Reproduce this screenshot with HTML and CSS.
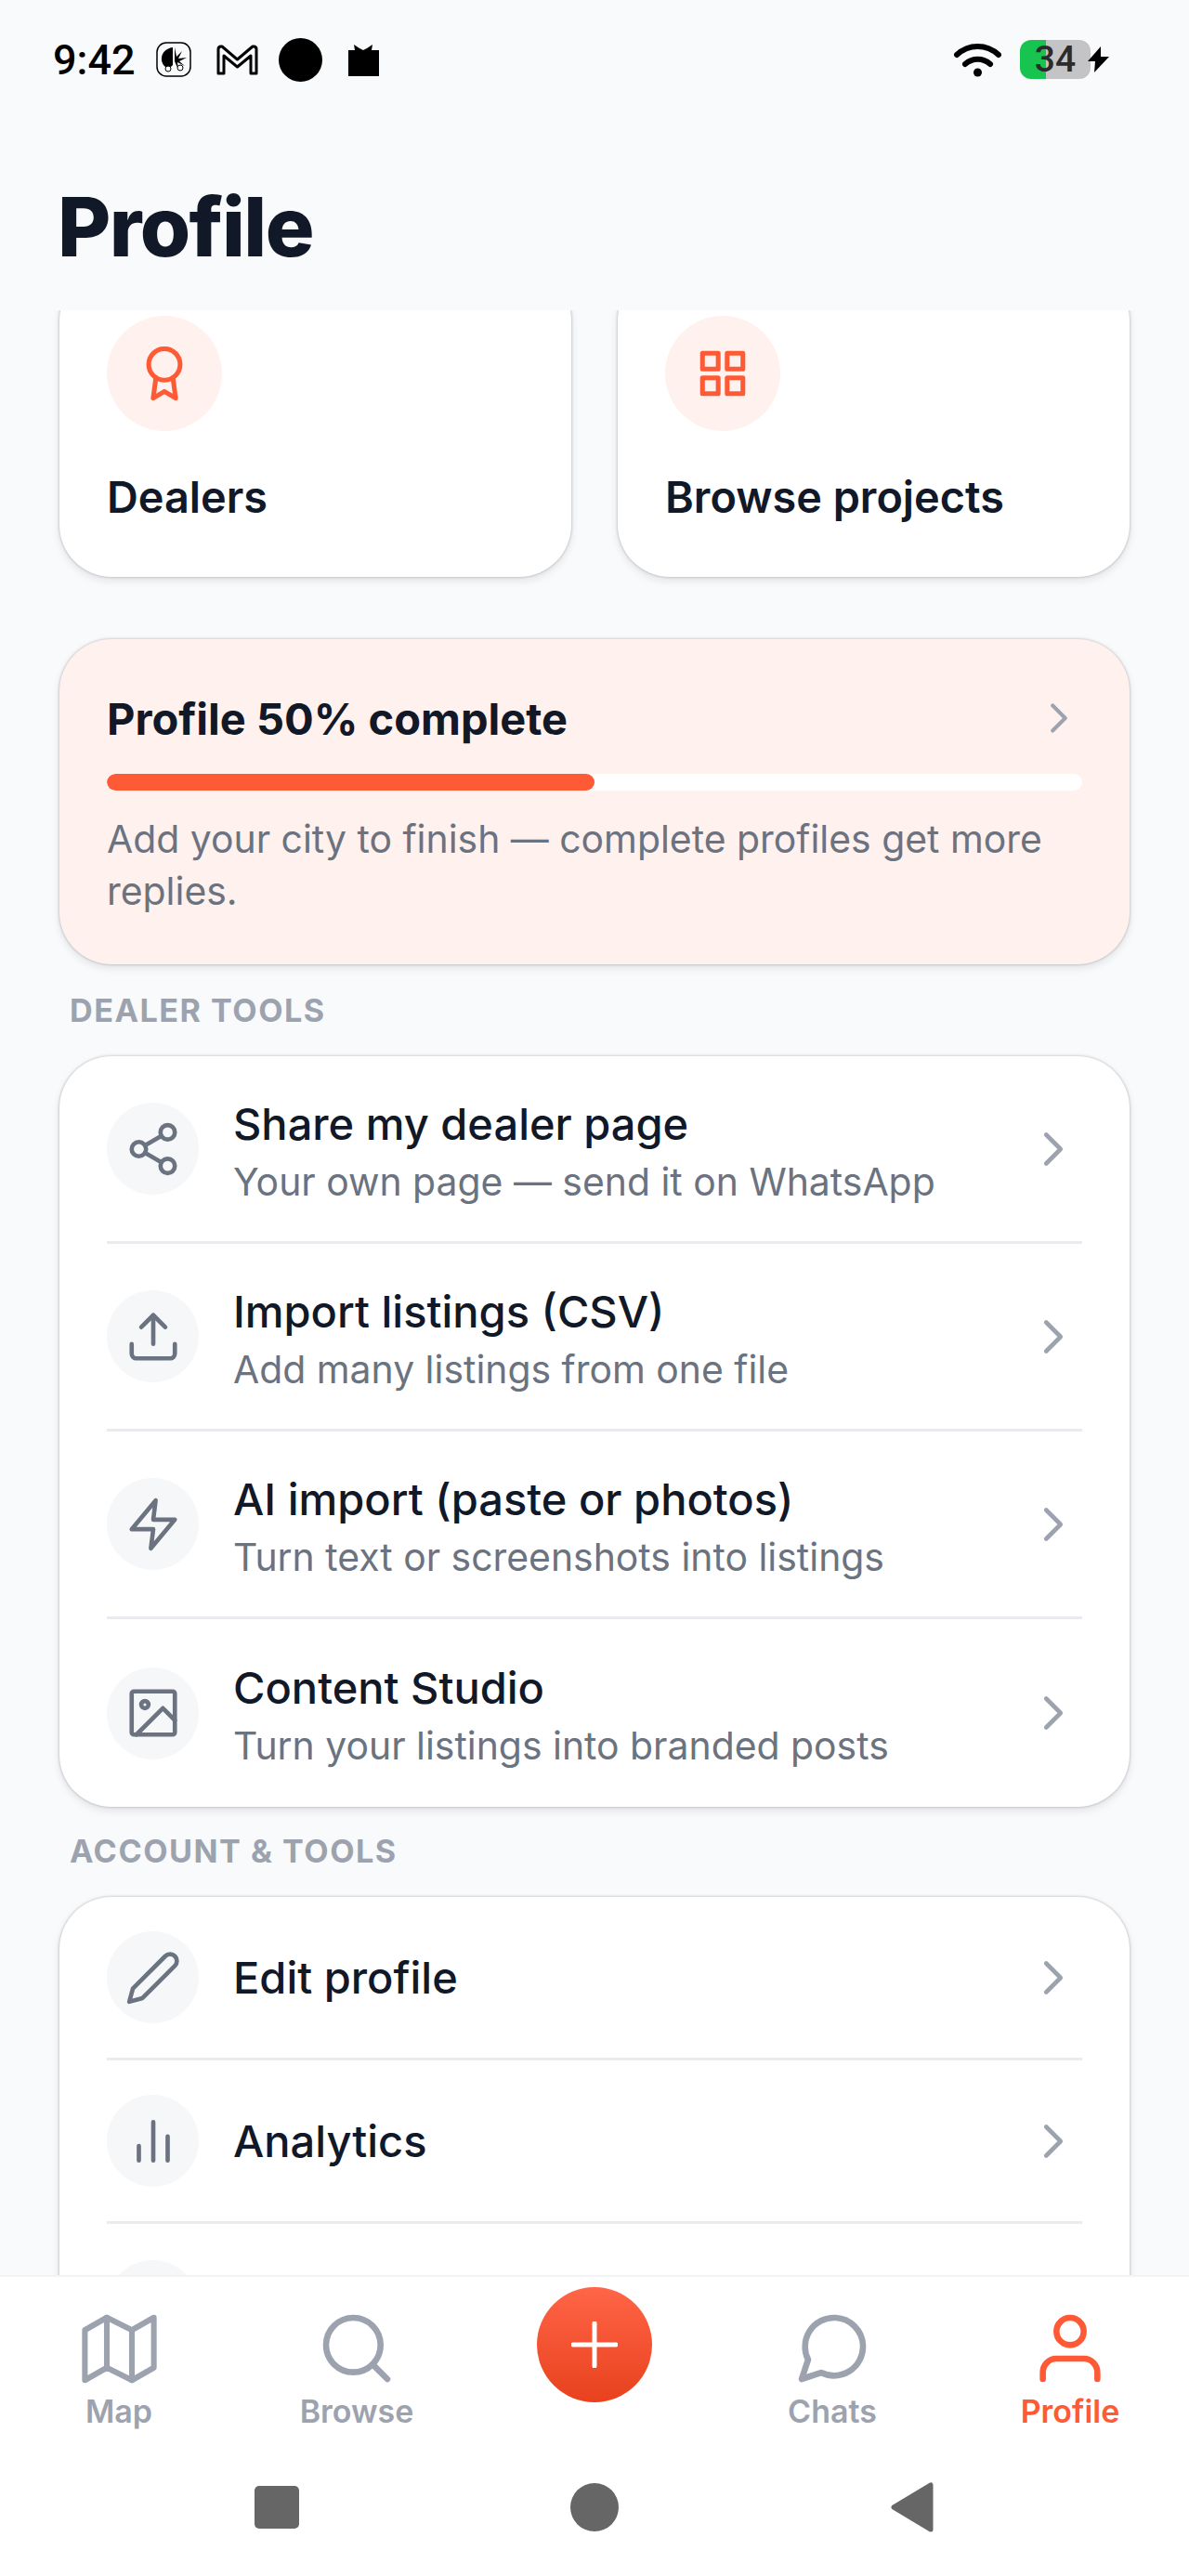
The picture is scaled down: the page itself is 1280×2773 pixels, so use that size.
FILE: index.html
```html
<!DOCTYPE html>
<html>
<head>
    <title>Profile</title>
    <link rel="stylesheet" href="styles.css">
</head>
<body>
    <div class="app">
        <div class="statusbar">
            <span class="clock">9:42</span>
            <svg class="st-app" viewBox="0 0 38 38"><rect x="1" y="1" width="36" height="36" rx="10" fill="none" stroke="#000" stroke-width="1.5"/><path d="M18 6C10 7 5 13 6 20c1 5 4 8 8 9l4-4z" fill="#000"/><path d="M20 6l2 10 6-6-4 8 9-1-8 4 6 5-8-4 1 8-4-9z" fill="#000"/><circle cx="26" cy="28" r="3" fill="#fff" stroke="#000"/><circle cx="13" cy="29" r="3" fill="#fff" stroke="#000"/></svg>
            <svg class="st-mail" viewBox="0 0 45 33"><path d="M2 31V5q0-3 3-3h1l16.500 14L39 2h1q3 0 3 3v26h-6V12L22.500 24 8 12v19z" fill="none" stroke="#000" stroke-width="3" stroke-linejoin="round"/></svg>
            <span class="st-dot"></span>
            <svg class="st-gift" viewBox="0 0 35 35"><path d="M1 7h7l-1-6 6 4 4 2 4-2 6-4-1 6h8v28H1z" fill="#000"/></svg>
            <span class="status-spacer"></span>
            <svg class="st-wifi" viewBox="0 0 51 37"><path d="M3 13C16 1 35 1 48 13M12 23c8-7 19-7 27 0" fill="none" stroke="#000" stroke-width="6" stroke-linecap="round"/><circle cx="25.500" cy="32" r="4.500" fill="#000"/></svg>
            <span class="battery">34</span>
            <svg class="st-bolt" viewBox="0 0 25 28"><path d="M15 0L1 16h8L8 28l16-17h-9z" fill="#000"/></svg>
        </div>

        <div class="pagehead">
            <h1 class="pagetitle">Profile</h1>
        </div>

        <div class="scroller">
            <div class="scroller-inner">
                <div class="quick-grid">
                    <div class="quick-card">
                        <span class="quick-icon">
                            <svg class="icon award" viewBox="0 0 24 24"><circle cx="12" cy="8" r="7"/><path d="M8.210 13.890L7 23l5-3 5 3-1.210-9.120"/></svg>
                        </span>
                        <div class="quick-label">Dealers</div>
                    </div>
                    <div class="quick-card">
                        <span class="quick-icon">
                            <svg class="icon" viewBox="0 0 24 24"><rect x="3" y="3" width="7" height="7"/><rect x="14" y="3" width="7" height="7"/><rect x="14" y="14" width="7" height="7"/><rect x="3" y="14" width="7" height="7"/></svg>
                        </span>
                        <div class="quick-label">Browse projects</div>
                    </div>
                </div>

                <div class="progress-card">
                    <div class="progress-head">
                        <span class="progress-title">Profile 50% complete</span>
                        <svg class="icon chevron-small" viewBox="0 0 24 24"><path d="M9 18l6-6-6-6"/></svg>
                    </div>
                    <div class="progress-track"><div class="progress-fill" style="width: 50%"></div></div>
                    <p class="progress-text">Add your city to finish — complete profiles get more replies.</p>
                </div>

                <div class="section-label">DEALER TOOLS</div>
                <div class="list-card">
                    <div class="row">
                        <span class="row-icon"><svg class="icon" viewBox="0 0 24 24"><circle cx="18" cy="5" r="3"/><circle cx="6" cy="12" r="3"/><circle cx="18" cy="19" r="3"/><path d="M8.590 13.510l6.830 3.980M15.410 6.510l-6.820 3.980"/></svg></span>
                        <div class="row-text">
                            <div class="row-title">Share my dealer page</div>
                            <div class="row-sub">Your own page — send it on WhatsApp</div>
                        </div>
                        <svg class="icon chevron" viewBox="0 0 24 24"><path d="M9 18l6-6-6-6"/></svg>
                    </div>
                    <div class="row">
                        <span class="row-icon"><svg class="icon" viewBox="0 0 24 24"><path d="M21 15v4a2 2 0 0 1-2 2H5a2 2 0 0 1-2-2v-4"/><path d="M17 8l-5-5-5 5"/><path d="M12 3v12"/></svg></span>
                        <div class="row-text">
                            <div class="row-title">Import listings (CSV)</div>
                            <div class="row-sub">Add many listings from one file</div>
                        </div>
                        <svg class="icon chevron" viewBox="0 0 24 24"><path d="M9 18l6-6-6-6"/></svg>
                    </div>
                    <div class="row">
                        <span class="row-icon"><svg class="icon" viewBox="0 0 24 24"><path d="M13 2L3 14h9l-1 8 10-12h-9z"/></svg></span>
                        <div class="row-text">
                            <div class="row-title">AI import (paste or photos)</div>
                            <div class="row-sub">Turn text or screenshots into listings</div>
                        </div>
                        <svg class="icon chevron" viewBox="0 0 24 24"><path d="M9 18l6-6-6-6"/></svg>
                    </div>
                    <div class="row">
                        <span class="row-icon"><svg class="icon" viewBox="0 0 24 24"><rect x="3" y="3" width="18" height="18" rx="1"/><circle cx="8.500" cy="8.500" r="1.500"/><path d="M21 15l-5-5L5 21"/></svg></span>
                        <div class="row-text">
                            <div class="row-title">Content Studio</div>
                            <div class="row-sub">Turn your listings into branded posts</div>
                        </div>
                        <svg class="icon chevron" viewBox="0 0 24 24"><path d="M9 18l6-6-6-6"/></svg>
                    </div>
                </div>

                <div class="section-label">ACCOUNT &amp; TOOLS</div>
                <div class="list-card">
                    <div class="row row-plain">
                        <span class="row-icon"><svg class="icon" viewBox="0 0 24 24"><path d="M17 3a2.828 2.828 0 1 1 4 4L7.500 20.500 2 22l1.500-5.500z"/></svg></span>
                        <div class="row-text">
                            <div class="row-title">Edit profile</div>
                        </div>
                        <svg class="icon chevron" viewBox="0 0 24 24"><path d="M9 18l6-6-6-6"/></svg>
                    </div>
                    <div class="row row-plain">
                        <span class="row-icon"><svg class="icon" viewBox="0 0 24 24"><path d="M18 20V10M12 20V4M6 20v-6"/></svg></span>
                        <div class="row-text">
                            <div class="row-title">Analytics</div>
                        </div>
                        <svg class="icon chevron" viewBox="0 0 24 24"><path d="M9 18l6-6-6-6"/></svg>
                    </div>
                    <div class="row row-plain">
                        <span class="row-icon"></span>
                    </div>
                </div>
            </div>
        </div>

        <div class="bottombar">
            <div class="tabs">
                <div class="tab">
                    <span class="tab-slot"><svg class="icon tab-map" viewBox="0 0 24 24"><path d="M1 6v16l7-4 8 4 7-4V2l-7 4-8-4z"/><path d="M8 2v16M16 6v16"/></svg></span>
                    <span class="tab-label">Map</span>
                </div>
                <div class="tab">
                    <span class="tab-slot"><svg class="icon tab-icon" viewBox="0 0 24 24"><circle cx="11" cy="11" r="8"/><path d="M21 21l-4.350-4.350"/></svg></span>
                    <span class="tab-label">Browse</span>
                </div>
                <div class="tab">
                    <span class="fab"><svg class="fab-plus" viewBox="0 0 50 50"><path d="M25 2v46M2 25h46"/></svg></span>
                </div>
                <div class="tab">
                    <span class="tab-slot"><svg class="icon tab-icon" viewBox="0 0 24 24"><path d="M21 11.500a8.380 8.380 0 0 1-.9 3.800 8.500 8.500 0 0 1-7.600 4.700 8.380 8.380 0 0 1-3.800-.9L3 21l1.900-5.700a8.380 8.380 0 0 1-.9-3.800 8.500 8.500 0 0 1 4.700-7.600 8.380 8.380 0 0 1 3.800-.9h.5a8.480 8.480 0 0 1 8 8z"/></svg></span>
                    <span class="tab-label">Chats</span>
                </div>
                <div class="tab tab-active">
                    <span class="tab-slot"><svg class="icon tab-icon" viewBox="0 0 24 24"><path d="M20 21v-2a4 4 0 0 0-4-4H8a4 4 0 0 0-4 4v2"/><circle cx="12" cy="7" r="4"/></svg></span>
                    <span class="tab-label">Profile</span>
                </div>
            </div>
            <div class="sysnav">
                <span class="sys-square"></span>
                <span class="sys-circle"></span>
                <svg class="sys-back" viewBox="0 0 48 54"><path d="M4 27L44 3v48z" fill="#666" stroke="#666" stroke-width="5" stroke-linejoin="round"/></svg>
            </div>
        </div>
    </div>
</body>
</html>
```

FILE: styles.css
```css
body {
    margin: 0;
    padding: 0;
    background-color: #f9fafb;
    font-family: Inter, "Noto Sans", sans-serif;
    color: #111827;
}

.app {
    width: 1280px;
    height: 2773px;
    display: flex;
    flex-direction: column;
    overflow: hidden;
}

.icon {
    fill: none;
    stroke: currentColor;
    stroke-width: 1.8;
    stroke-linecap: round;
    stroke-linejoin: round;
}

/* status bar */
.statusbar {
    height: 128px;
    flex: none;
    display: flex;
    align-items: center;
    padding: 0 85px 0 57px;
    color: #000;
}

.clock {
    font-family: Roboto, sans-serif;
    font-weight: 500;
    font-size: 45px;
    width: 111px;
}

.st-app {
    width: 38px;
    height: 38px;
}

.st-mail {
    width: 45px;
    height: 33px;
    margin-left: 27px;
}

.st-dot {
    width: 47px;
    height: 47px;
    border-radius: 50%;
    background-color: #000;
    margin-left: 22px;
}

.st-gift {
    width: 35px;
    height: 35px;
    margin-left: 27px;
}

.status-spacer {
    flex: 1;
}

.st-wifi {
    width: 51px;
    height: 37px;
}

.battery {
    width: 76px;
    height: 42px;
    margin-left: 20px;
    border-radius: 12px;
    background: linear-gradient(to right, #16c44f 37%, #c4c4c6 37%);
    font-family: Roboto, sans-serif;
    font-weight: 500;
    font-size: 39px;
    line-height: 42px;
    text-align: center;
    color: #2b2b2d;
}

.st-bolt {
    width: 25px;
    height: 28px;
    margin-left: -4px;
}

/* title */
.pagehead {
    height: 206px;
    flex: none;
    box-sizing: border-box;
    padding: 64px 62px 0;
}

.pagetitle {
    margin: 0;
    font-size: 88px;
    line-height: 104px;
    font-weight: 800;
    letter-spacing: -1.6px;
}

/* scrolling part */
.scroller {
    flex: 1;
    min-height: 0;
    overflow: hidden;
    padding: 0 64px;
}

.scroller-inner {
    margin-top: -45px;
}

.quick-grid {
    display: grid;
    grid-template-columns: 1fr 1fr;
    gap: 50px;
}

.quick-card,
.progress-card,
.list-card {
    border-radius: 56px;
    box-shadow: 0 0 3px rgba(17, 24, 39, 0.3), 0 4px 10px rgba(17, 24, 39, 0.1);
}

.quick-card {
    height: 332px;
    box-sizing: border-box;
    padding: 51px;
    background-color: #fff;
}

.quick-icon {
    width: 124px;
    height: 124px;
    border-radius: 50%;
    background-color: #fff1ed;
    color: #ff5a36;
    display: flex;
    align-items: center;
    justify-content: center;
}

.quick-icon .icon {
    width: 58px;
    height: 58px;
    stroke-width: 2.1;
}

.quick-label {
    margin-top: 40px;
    font-size: 46.8px;
    line-height: 62px;
    font-weight: 600;
}

.progress-card {
    margin: 67px 0 27px;
    height: 350px;
    box-sizing: border-box;
    padding: 54px 51px 0;
    background-color: #fff1ed;
}

.progress-head {
    display: flex;
    align-items: center;
    justify-content: space-between;
    height: 62px;
}

.progress-title {
    font-size: 47px;
    font-weight: 700;
}

.chevron-small {
    width: 54px;
    height: 54px;
    margin-right: -2px;
    color: #9ca3af;
}

.progress-track {
    margin-top: 29px;
    height: 18px;
    border-radius: 9px;
    background-color: #fff;
    overflow: hidden;
}

.progress-fill {
    height: 100%;
    border-radius: 9px;
    background-color: #ff5a36;
}

.progress-text {
    margin: 24px 0 0;
    font-size: 40.9px;
    line-height: 56px;
    color: #6b7280;
}

.section-label {
    margin: 25px 0 26px;
    padding-left: 11px;
    font-size: 34.2px;
    line-height: 46px;
    font-weight: 700;
    letter-spacing: 1.5px;
    color: #9ca3af;
}

.list-card {
    background-color: #fff;
    padding: 0 51px;
}

.row {
    height: 202px;
    box-sizing: border-box;
    display: flex;
    align-items: center;
    border-bottom: 3px solid #e9ebee;
}

.list-card .row:last-child {
    border-bottom: none;
}

.row-plain {
    height: 176px;
}

.row-icon {
    width: 99px;
    height: 99px;
    flex: none;
    border-radius: 50%;
    background-color: #f6f7f9;
    color: #6b7280;
    display: flex;
    align-items: center;
    justify-content: center;
}

.row-icon .icon {
    width: 62px;
    height: 62px;
}

.row-text {
    flex: 1;
    margin-left: 37px;
}

.row-title {
    font-size: 47px;
    line-height: 60px;
    font-weight: 500;
}

.row-sub {
    font-size: 40.9px;
    line-height: 64px;
    color: #6b7280;
}

.row-sub:last-child {
    margin-bottom: -10px;
}

.chevron {
    width: 62px;
    height: 62px;
    flex: none;
    color: #9ca3af;
}

/* bottom tabs */
.bottombar {
    height: 324px;
    flex: none;
    box-sizing: border-box;
    border-top: 2px solid #f1f3f5;
    background-color: #fff;
    padding-top: 33px;
}

.tabs {
    display: grid;
    grid-template-columns: repeat(5, 1fr);
    height: 131px;
}

.tab {
    display: flex;
    flex-direction: column;
    align-items: center;
    color: #9ca3af;
}

.tab-active {
    color: #ff5a36;
}

.tab-slot {
    height: 88px;
    display: flex;
    align-items: center;
}

.tab-icon {
    width: 88px;
    height: 88px;
}

.tab-map {
    width: 81px;
    height: 81px;
}

.tab-label {
    margin-top: 4px;
    font-size: 34px;
    line-height: 40px;
    font-weight: 600;
}

.fab {
    width: 124px;
    height: 124px;
    margin-top: -22px;
    border-radius: 50%;
    background: linear-gradient(to bottom, #ff6547, #e8411d);
    display: flex;
    align-items: center;
    justify-content: center;
}

.fab-plus {
    width: 50px;
    height: 50px;
    fill: none;
    stroke: #fff;
    stroke-width: 5;
    stroke-linecap: round;
}

.sysnav {
    margin-top: 57px;
    padding: 0 127px;
    display: grid;
    grid-template-columns: repeat(3, 1fr);
    justify-items: center;
    align-items: center;
}

.sys-square {
    width: 48px;
    height: 46px;
    border-radius: 5px;
    background-color: #666;
}

.sys-circle {
    width: 52px;
    height: 52px;
    border-radius: 50%;
    background-color: #666;
}

.sys-back {
    width: 48px;
    height: 54px;
}
```
